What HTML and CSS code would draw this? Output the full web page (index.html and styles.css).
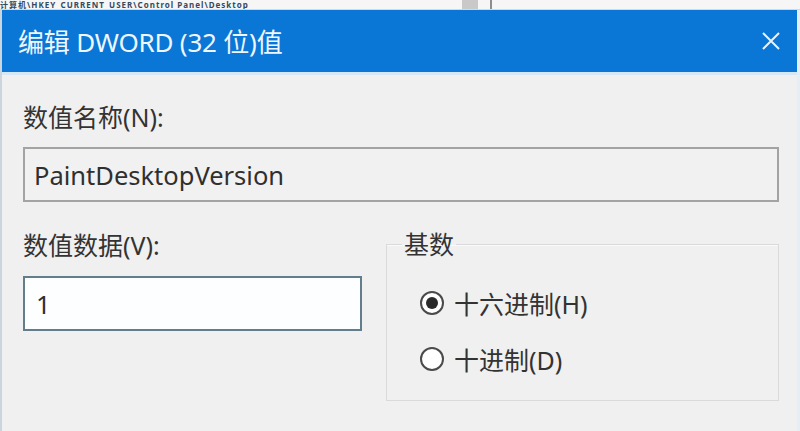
FILE: index.html
```html
<!DOCTYPE html>
<html lang="zh-CN">
<head>
    <meta charset="UTF-8">
    <meta name="viewport" content="width=device-width, initial-scale=1.0">
    <title>编辑 DWORD (32 位)值</title>
    <link rel="stylesheet" href="styles.css">
</head>
<body>
    <div class="backdrop">
        <div class="backdrop-path">计算机\HKEY_CURRENT_USER\Control Panel\Desktop</div>
        <div class="backdrop-thumb"></div>
        <div class="backdrop-split"></div>
    </div>

    <div class="dialog">
        <div class="titlebar">
            <span class="title">编辑 DWORD (32 位)值</span>
            <button class="close" type="button" aria-label="关闭">
                <svg width="20" height="20" viewBox="0 0 20 20">
                    <path d="M2 2 L18 18 M18 2 L2 18" stroke="#e8f3ff" stroke-width="2" fill="none"/>
                </svg>
            </button>
        </div>

        <div class="content">
            <label class="field-label" for="valueName">数值名称(N):</label>
            <input class="name-box" id="valueName" type="text" value="PaintDesktopVersion" readonly>

            <div class="lower">
                <div class="data-col">
                    <label class="field-label" for="valueData">数值数据(V):</label>
                    <input class="data-box" id="valueData" type="text" value="1">
                </div>

                <fieldset class="base-group">
                    <legend>基数</legend>
                    <div class="radio-list">
                        <div class="radio-row">
                            <span class="radio checked"></span>
                            <span>十六进制(H)</span>
                        </div>
                        <div class="radio-row">
                            <span class="radio"></span>
                            <span>十进制(D)</span>
                        </div>
                    </div>
                </fieldset>
            </div>
        </div>
    </div>
</body>
</html>
```

FILE: styles.css
```css
body {
    margin: 0;
    width: 800px;
    height: 431px;
    overflow: hidden;
    background-color: #f0f0f0;
    font-family: "Noto Sans", "Noto Sans CJK SC", sans-serif;
    color: #2b2b2b;
}

.backdrop {
    display: flex;
    height: 9px;
    overflow: hidden;
    background-color: #f6f6f6;
    border-bottom: 1px solid #c4dcf0;
}

.backdrop-path {
    width: 462px;
    font-size: 8px;
    font-weight: bold;
    line-height: 10px;
    letter-spacing: 1px;
    color: #34495f;
    white-space: nowrap;
}

.backdrop-thumb {
    width: 16px;
    background-color: #c9c9c9;
}

.backdrop-split {
    width: 2px;
    margin-left: 12px;
    background-color: #8d8d8d;
}

.dialog {
    height: 421px;
    border-left: 2px solid #cbd5dd;
    border-right: 3px solid #e6eef5;
    box-sizing: border-box;
}

.titlebar {
    display: flex;
    align-items: center;
    justify-content: space-between;
    height: 62px;
    padding: 0 16px 0 16px;
    background-color: #0a76d5;
    border-bottom: 3px solid #d6e8f7;
}

.title {
    font-size: 26px;
    color: #eef6ff;
    letter-spacing: -0.2px;
}

.close {
    display: flex;
    padding: 0;
    border: none;
    background: none;
}

.content {
    padding: 26px 18px 0 21px;
}

.field-label {
    display: block;
    font-size: 25px;
    line-height: 32px;
    color: #333;
}

.name-box, .data-box {
    display: block;
    box-sizing: border-box;
    height: 55px;
    padding: 0 9px;
    font-family: inherit;
    font-size: 25.5px;
    color: #2f2f2f;
    outline: none;
}

.name-box {
    width: 100%;
    margin-top: 14px;
    border: 2px solid #a3a3a3;
    background-color: #f1f1f1;
}

.lower {
    display: flex;
    gap: 24px;
    margin-top: 27px;
}

.data-col {
    width: 339px;
}

.data-box {
    width: 100%;
    margin-top: 15px;
    border: 2px solid #647d8c;
    background-color: #fdfeff;
    padding-left: 11px;
}

.base-group {
    flex: 1;
    margin: 2px 0 0;
    padding: 0;
    height: 170px;
    box-sizing: border-box;
    border: 1px solid #dadada;
    box-shadow: 0 1px 0 #fafafa inset;
}

.base-group legend {
    padding: 0 2px;
    margin-left: 15px;
    font-size: 25px;
    line-height: 26px;
    color: #333;
}

.radio-list {
    padding: 18px 0 0 33px;
}

.radio-row {
    display: flex;
    align-items: center;
    gap: 10px;
    height: 56px;
    font-size: 25px;
    color: #333;
}

.radio {
    position: relative;
    width: 24px;
    height: 24px;
    box-sizing: border-box;
    border: 2px solid #4a4a4a;
    border-radius: 50%;
    background-color: #fff;
}

.radio.checked::after {
    content: "";
    position: absolute;
    top: 4px;
    left: 4px;
    width: 12px;
    height: 12px;
    border-radius: 50%;
    background-color: #2a2a2a;
}
```
